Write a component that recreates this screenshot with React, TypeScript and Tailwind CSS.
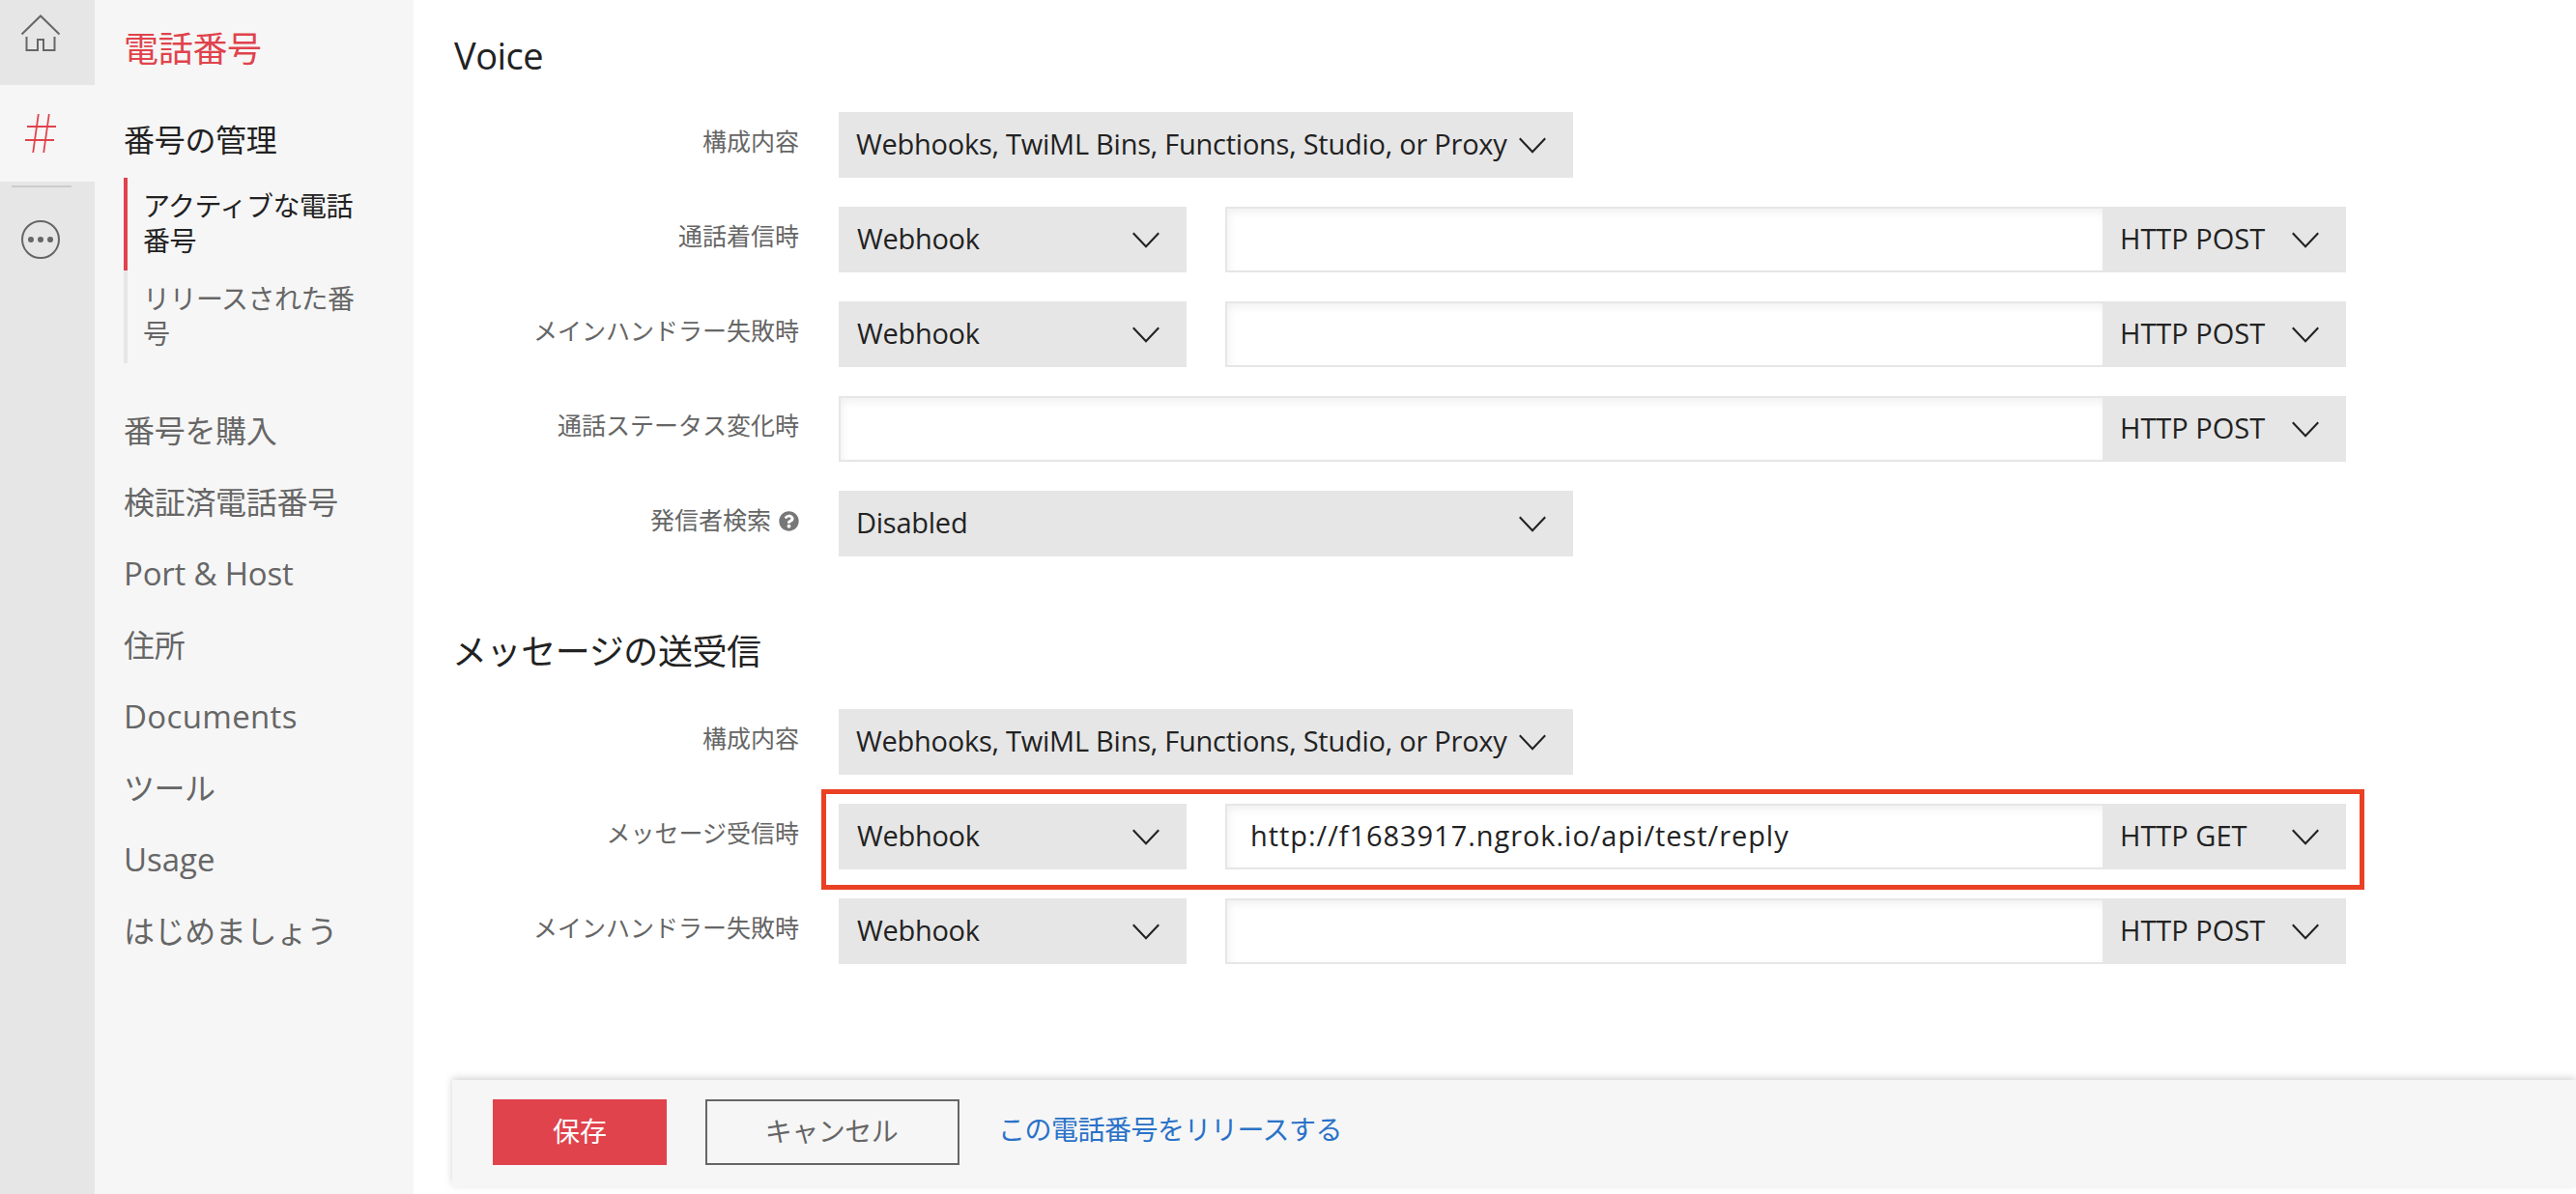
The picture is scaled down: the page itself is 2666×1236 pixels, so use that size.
import { FaQuestionCircle } from "react-icons/fa";

interface Field {
  label: string;
  kind: "wide" | "webhook" | "url";
  value?: string;
  url?: string;
  method?: string;
  help?: boolean;
  highlighted?: boolean;
}

const CONFIG_OPTION = "Webhooks, TwiML Bins, Functions, Studio, or Proxy";

const voiceFields: Field[] = [
  { label: "構成内容", kind: "wide", value: CONFIG_OPTION },
  { label: "通話着信時", kind: "webhook", method: "HTTP POST" },
  { label: "メインハンドラー失敗時", kind: "webhook", method: "HTTP POST" },
  { label: "通話ステータス変化時", kind: "url", method: "HTTP POST" },
  { label: "発信者検索", kind: "wide", value: "Disabled", help: true }
];

const messagingFields: Field[] = [
  { label: "構成内容", kind: "wide", value: CONFIG_OPTION },
  {
    label: "メッセージ受信時",
    kind: "webhook",
    url: "http://f1683917.ngrok.io/api/test/reply",
    method: "HTTP GET",
    highlighted: true
  },
  { label: "メインハンドラー失敗時", kind: "webhook", method: "HTTP POST" }
];

const navItems = [
  { label: "番号を購入", className: "tracking-[-0.3px]" },
  { label: "検証済電話番号", className: "tracking-[-0.3px]" },
  { label: "Port & Host", className: "text-[33px] tracking-[-0.2px]" },
  { label: "住所", className: "tracking-[-0.3px]" },
  { label: "Documents", className: "text-[33px] tracking-[0.35px]" },
  { label: "ツール", className: "tracking-[-0.5px]" },
  { label: "Usage", className: "text-[33px]" },
  { label: "はじめましょう", className: "tracking-[-0.4px]" }
];

function Chevron() {
  return (
    <svg width="28" height="17" viewBox="0 0 28 17" fill="none" className="shrink-0">
      <path d="M0.8 1.2L14 15.2L27.2 1.2" stroke="#222" strokeWidth="2.1" />
    </svg>
  );
}

function HomeIcon() {
  return (
    <svg width="42" height="40" viewBox="0 0 42 40" fill="none" stroke="#666" strokeWidth="2">
      <path d="M1.5 20.5L21 1.5L40.5 20.5" />
      <path d="M6.5 23V37H18V26H24V37H35.5V23" />
    </svg>
  );
}

function HashIcon() {
  return (
    <svg width="34" height="40" viewBox="0 0 34 40" fill="none" stroke="#e0434c" strokeWidth="2">
      <path d="M2 13H32M0 27H30" />
      <path d="M13.8 0L8.2 40M24.8 0L19.2 40" strokeWidth="1.8" />
    </svg>
  );
}

function MoreIcon() {
  return (
    <svg width="42" height="42" viewBox="0 0 42 42" fill="none">
      <circle cx="21" cy="21" r="19" stroke="#666" strokeWidth="2" />
      <circle cx="11" cy="21" r="3" fill="#666" />
      <circle cx="21" cy="21" r="3" fill="#666" />
      <circle cx="31" cy="21" r="3" fill="#666" />
    </svg>
  );
}

function Rail() {
  return (
    <aside className="w-[98px] shrink-0 bg-[#e6e6e6]">
      <div className="h-[88px] pl-[21px] pt-[15px]">
        <HomeIcon />
      </div>
      <div className="h-[100px] pl-[26px] pt-[30px] bg-[#f6f6f6]">
        <HashIcon />
      </div>
      <div className="mt-1 ml-3 w-[62px] h-0.5 bg-[#ccc]" />
      <div className="mt-[33px] pl-[21px]">
        <MoreIcon />
      </div>
    </aside>
  );
}

function Sidebar() {
  return (
    <nav className="w-[330px] shrink-0 bg-[#f6f6f6] pl-[30px] text-[32px] text-[#666]">
      <h1 className="h-[109px] pt-6 text-[36px] leading-[54px] tracking-[-0.3px] text-[#e0434c]">
        電話番号
      </h1>
      <h2 className="h-[75px] pt-3 leading-[48px] tracking-[-0.3px] text-[#222]">
        番号の管理
      </h2>
      <ul className="text-[28px] leading-[36px] tracking-[-0.5px]">
        <li className="h-24 w-[270px] border-l-4 border-[#e0434c] py-[11px] pl-4 pr-4 text-[#222]">
          アクティブな電話番号
        </li>
        <li className="h-24 w-[270px] border-l-4 border-[#e6e6e6] py-[11px] pl-4 pr-4">
          リリースされた番号
        </li>
      </ul>
      <ul className="mt-[33px]">
        {navItems.map((item) => (
          <li key={item.label} className={`h-[74px] leading-[74px] ${item.className}`}>
            {item.label}
          </li>
        ))}
      </ul>
    </nav>
  );
}

function Select({ value, className }: { value: string; className: string }) {
  return (
    <div
      className={`flex h-[68px] shrink-0 items-center justify-between whitespace-nowrap bg-[#e6e6e6] pr-7 text-[29px] text-[#222] ${className}`}
    >
      <span className="pb-[3px]">{value}</span>
      <Chevron />
    </div>
  );
}

function FieldRow({ field }: { field: Field }) {
  return (
    <div className="relative flex h-[68px] items-center">
      <div className="flex w-[359px] -translate-y-[3px] items-center justify-end gap-2 text-[25px] text-[#666]">
        {field.label}
        {field.help && <FaQuestionCircle size={21} color="#777" />}
      </div>
      <div className="ml-[41px] flex">
        {field.kind === "wide" && (
          <Select value={field.value!} className="w-[760px] pl-[18px] tracking-[-0.25px]" />
        )}
        {field.kind === "webhook" && (
          <Select value="Webhook" className="mr-10 w-[360px] pl-[19px] tracking-[-0.3px]" />
        )}
        {field.kind !== "wide" && (
          <>
            <div
              className={`flex h-[68px] items-center border-2 border-r-0 border-[#e6e6e6] bg-white pb-[3px] pl-6 text-[29px] tracking-[0.95px] text-[#222] shadow-[inset_2px_4px_8px_rgba(0,0,0,0.06)] ${
                field.kind === "url" ? "w-[1308px]" : "w-[908px]"
              }`}
            >
              {field.url}
            </div>
            <Select value={field.method!} className="w-[252px] pl-[18px]" />
          </>
        )}
      </div>
      {field.highlighted && (
        <div className="absolute -top-[15px] left-[382px] h-[104px] w-[1597px] border-[5px] border-[#ea4024]" />
      )}
    </div>
  );
}

export default function App() {
  return (
    <div className="flex h-[1236px] w-full overflow-hidden bg-white font-['Open_Sans','Noto_Sans_CJK_JP',sans-serif]">
      <Rail />
      <Sidebar />
      <main className="flex min-w-0 flex-1 flex-col pl-10">
        <section>
          <h2 className="h-[116px] pl-0.5 pt-[30px] text-[38px] leading-[54px] tracking-[-0.5px] text-[#222]">
            Voice
          </h2>
          <div className="flex flex-col gap-[30px]">
            {voiceFields.map((field) => (
              <FieldRow key={field.label} field={field} />
            ))}
          </div>
        </section>

        <section>
          <h2 className="h-[158px] pt-[72px] text-[36px] leading-[54px] tracking-[-0.4px] text-[#222]">
            メッセージの送受信
          </h2>
          <div className="flex flex-col gap-[30px]">
            {messagingFields.map((field) => (
              <FieldRow key={field.label} field={field} />
            ))}
          </div>
        </section>

        {/* Sticky action bar */}
        <div className="mt-[120px] flex h-[110px] items-start bg-[#f6f6f6] pl-[42px] pt-5 text-[28px] shadow-[0_-2px_8px_rgba(0,0,0,0.18)]">
          <button className="h-[68px] w-[180px] bg-[#e0434c] pb-0.5 text-white">保存</button>
          <button className="ml-10 h-[68px] w-[263px] border-2 border-[#666] pb-0.5 pr-0.5 tracking-[-0.5px] text-[#666]">
            キャンセル
          </button>
          <a className="ml-10 leading-[62px] tracking-[-0.5px] text-[#2a72c8]">
            この電話番号をリリースする
          </a>
        </div>
      </main>
    </div>
  );
}
